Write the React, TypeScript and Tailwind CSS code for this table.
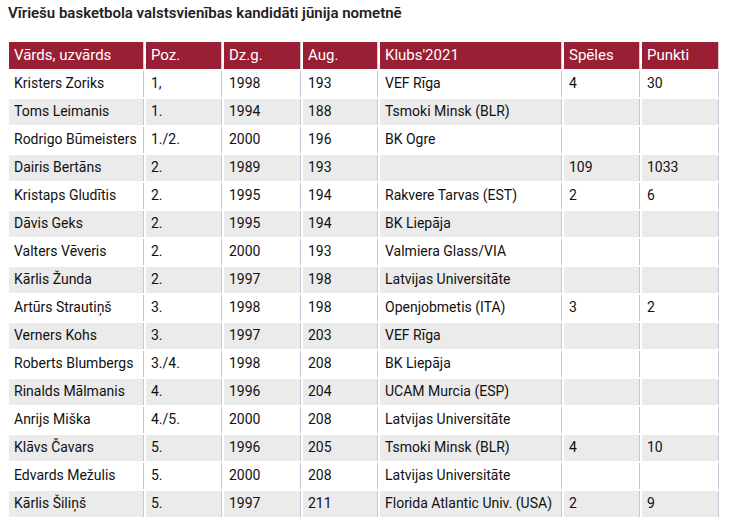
import React from 'react';

const rows: string[][] = [
  ['Kristers Zoriks', '1,', '1998', '193', 'VEF Rīga', '4', '30'],
  ['Toms Leimanis', '1.', '1994', '188', 'Tsmoki Minsk (BLR)', '', ''],
  ['Rodrigo Būmeisters', '1./2.', '2000', '196', 'BK Ogre', '', ''],
  ['Dairis Bertāns', '2.', '1989', '193', '', '109', '1033'],
  ['Kristaps Gludītis', '2.', '1995', '194', 'Rakvere Tarvas (EST)', '2', '6'],
  ['Dāvis Geks', '2.', '1995', '194', 'BK Liepāja', '', ''],
  ['Valters Vēveris', '2.', '2000', '193', 'Valmiera Glass/VIA', '', ''],
  ['Kārlis Žunda', '2.', '1997', '198', 'Latvijas Universitāte', '', ''],
  ['Artūrs Strautiņš', '3.', '1998', '198', 'Openjobmetis (ITA)', '3', '2'],
  ['Verners Kohs', '3.', '1997', '203', 'VEF Rīga', '', ''],
  ['Roberts Blumbergs', '3./4.', '1998', '208', 'BK Liepāja', '', ''],
  ['Rinalds Mālmanis', '4.', '1996', '204', 'UCAM Murcia (ESP)', '', ''],
  ['Anrijs Miška', '4./5.', '2000', '208', 'Latvijas Universitāte', '', ''],
  ['Klāvs Čavars', '5.', '1996', '205', 'Tsmoki Minsk (BLR)', '4', '10'],
  ['Edvards Mežulis', '5.', '2000', '208', 'Latvijas Universitāte', '', ''],
  ['Kārlis Šiliņš', '5.', '1997', '211', 'Florida Atlantic Univ. (USA)', '2', '9'],
];

const headers = ['Vārds, uzvārds', 'Poz.', 'Dz.g.', 'Aug.', "Klubs'2021", 'Spēles', 'Punkti'];
// column widths in px (gap of 2px between them)
const widths = [135, 76, 77, 75, 182, 76, 77];

const App = () => {
  return (
    <div className="w-[744px] h-[523px] bg-white font-['Roboto',sans-serif] text-[#111]">
      <h1 className="pt-[2px] pl-2 text-[15px] font-semibold text-[#222]">
        Vīriešu basketbola valstsvienības kandidāti jūnija nometnē
      </h1>
      <table className="mt-[15px] ml-[7px] table-fixed border-separate border-spacing-[2px] text-[14px]">
        <colgroup>
          {widths.map((w, i) => (
            <col key={i} style={{ width: w }} />
          ))}
        </colgroup>
        <thead>
          <tr>
            {headers.map((h) => (
              <th
                key={h}
                className="h-[27px] bg-[#9a1f34] border-r border-[#d9c9cf] px-[5px] text-left font-normal text-[15px] text-white"
              >
                {h}
              </th>
            ))}
          </tr>
        </thead>
        <tbody>
          {rows.map((r, i) => (
            <tr key={i}>
              {r.map((c, j) => (
                <td
                  key={j}
                  className={`h-[26px] border-r border-[#c8c4d8] px-[5px] whitespace-nowrap ${
                    i % 2 === 1 ? 'bg-[#ebebeb]' : 'bg-white'
                  }`}
                >
                  {c}
                </td>
              ))}
            </tr>
          ))}
        </tbody>
      </table>
    </div>
  );
};

export default App;
